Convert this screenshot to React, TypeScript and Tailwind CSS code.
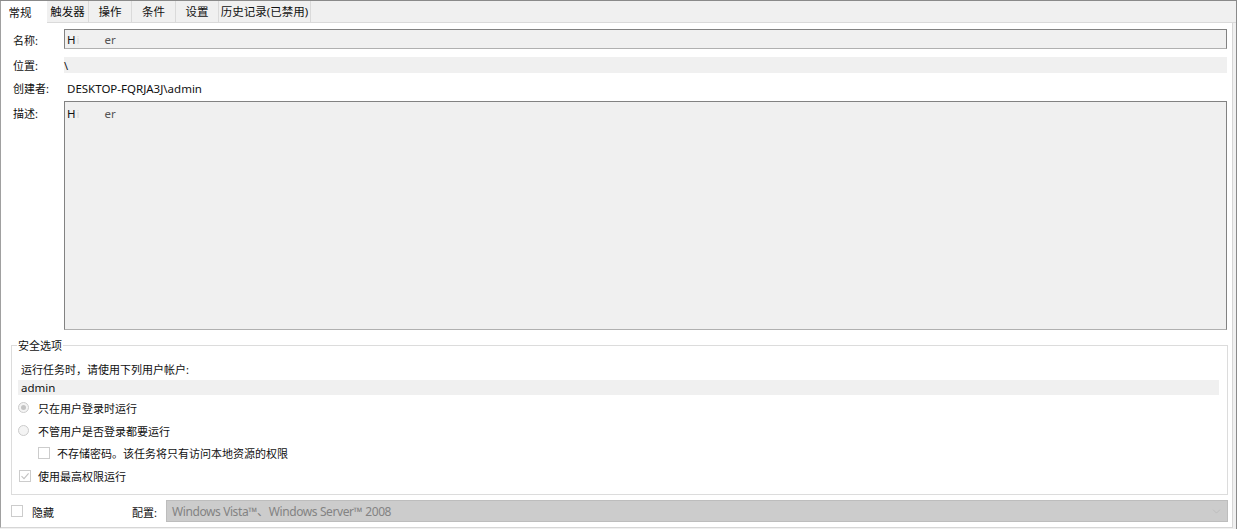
import { ChevronDown } from 'lucide-react';

const tabs = [
  { label: '常规', w: 'w-[47px]', active: true },
  { label: '触发器', w: 'w-[42px]' },
  { label: '操作', w: 'w-[43px]' },
  { label: '条件', w: 'w-[44px]' },
  { label: '设置', w: 'w-[43px]' },
  { label: '历史记录(已禁用)', w: 'w-[92px]' },
];

function Radio({ checked, label }: { checked?: boolean; label: string }) {
  return (
    <div className="flex h-[23px] items-center">
      <span className="ml-[6px] flex h-[11px] w-[11px] items-center justify-center rounded-full border border-[#cccccc] bg-[#f4f4f4]">
        {checked && <span className="h-[5px] w-[5px] rounded-full bg-[#c4c4c4]" />}
      </span>
      <span className="ml-[9px] pt-[1px]">{label}</span>
    </div>
  );
}

function Box({ checked }: { checked?: boolean }) {
  return (
    <span className="flex h-[12px] w-[12px] shrink-0 items-center justify-center border border-[#cccccc] bg-white">
      {checked && (
        <svg width="10" height="10" viewBox="0 0 10 10" fill="none">
          <path d="M1.5 5.2 L4 7.6 L8.6 2.4" stroke="#c2c2c2" strokeWidth="1.1" />
        </svg>
      )}
    </span>
  );
}

function Redacted() {
  return (
    <span className="flex items-center pt-[2px] text-[11.5px]">
      H<span className="ml-[1px] text-[#d8d8d8]">i</span>
      <span className="w-[25px]" />
      <span className="text-[#555]">er</span>
    </span>
  );
}

export default function App() {
  return (
    <div
      className="relative h-[529px] w-[1237px] overflow-hidden border-t border-r border-[#8a8a8a] bg-[#f0f0f0] text-[11px] leading-none text-[#111]"
      style={{ fontFamily: '"Noto Sans", "Noto Sans CJK SC", sans-serif' }}
    >
      {/* tab strip */}
      <div className="flex h-[22px]">
        {tabs.map((t) =>
          t.active ? (
            <div
              key={t.label}
              className={`${t.w} relative z-10 flex h-[23px] shrink-0 items-center justify-center whitespace-nowrap border-l border-[#a0a0a0] bg-white pr-[8px] pt-[1px] text-[11.5px]`}
            >
              {t.label}
            </div>
          ) : (
            <div
              key={t.label}
              className={`${t.w} flex h-[22px] shrink-0 items-center justify-center whitespace-nowrap border-r border-b border-[#dadada] bg-[#f0f0f0] pt-[1px] text-[11.5px]`}
            >
              {t.label}
            </div>
          ),
        )}
        <div className="flex-1 border-b border-[#dadada]" />
      </div>

      {/* page */}
      <div className="h-[505px] w-[1233px] border-r border-b border-l border-[#d6d6d6] border-l-[#a0a0a0] bg-white pt-[6px]">
        <div className="flex h-[20px] items-center">
          <span className="w-[63px] shrink-0 pl-[12px] pt-[2px]">名称:</span>
          <div className="flex h-[20px] w-[1163px] items-center border border-[#828282] border-b-[#b0b0b0] bg-[#f0f0f0] pl-[2px]">
            <Redacted />
          </div>
        </div>

        <div className="mt-[8px] flex h-[16px] items-center">
          <span className="w-[63px] shrink-0 pl-[12px] pt-[1px]">位置:</span>
          <div className="flex h-[16px] w-[1163px] items-center bg-[#f0f0f0] pt-[1px]">\</div>
        </div>

        <div className="mt-[7px] flex h-[16px] items-center">
          <span className="w-[66px] shrink-0 pl-[12px] pt-[1px]">创建者:</span>
          <span className="pt-[1px] text-[11.5px]">DESKTOP-FQRJA3J\admin</span>
        </div>

        <div className="mt-[5px] flex">
          <span className="w-[63px] shrink-0 pl-[12px] pt-[7px]">描述:</span>
          <div className="h-[229px] w-[1163px] border border-[#828282] border-b-[#b0b0b0] bg-[#f0f0f0] pl-[2px] pt-[4px]">
            <Redacted />
          </div>
        </div>

        {/* security group */}
        <fieldset className="mt-[7px] ml-[10px] h-[158px] w-[1217px] border border-[#dcdcdc]">
          <legend className="ml-[5px] px-[1px] leading-[17px]">安全选项</legend>
          <div className="mt-[7px] h-[16px] pl-[9px] leading-[18px]">运行任务时，请使用下列用户帐户:</div>
          <div className="ml-[6px] mt-[3px] flex h-[15px] w-[1201px] items-center bg-[#f0f0f0] pl-[3px] pt-[1px] text-[11.5px]">
            admin
          </div>
          <div className="mt-[1px]">
            <Radio checked label="只在用户登录时运行" />
            <Radio label="不管用户是否登录都要运行" />
            <div className="flex h-[22px] items-center pl-[26px]">
              <Box />
              <span className="ml-[7px] pt-[1px]">不存储密码。该任务将只有访问本地资源的权限</span>
            </div>
            <div className="flex h-[24px] items-center pl-[7px]">
              <Box checked />
              <span className="ml-[7px] pt-[1px]">使用最高权限运行</span>
            </div>
          </div>
        </fieldset>

        <div className="mt-[5px] flex h-[22px] items-center">
          <span className="ml-[10px]">
            <Box />
          </span>
          <span className="ml-[9px] pt-[2px]">隐藏</span>
          <span className="ml-[78px] pt-[2px]">配置:</span>
          <div className="ml-[9px] flex h-[22px] w-[1062px] items-center justify-between border border-[#bdbdbd] bg-[#cccccc] pl-[5px] pr-[4px] text-[12px] tracking-[-0.4px] text-[#838383]">
            <span className="pt-[2px]">Windows Vista™、Windows Server™ 2008</span>
            <ChevronDown size={13} strokeWidth={1} color="#b0b0b0" />
          </div>
        </div>
      </div>
    </div>
  );
}
